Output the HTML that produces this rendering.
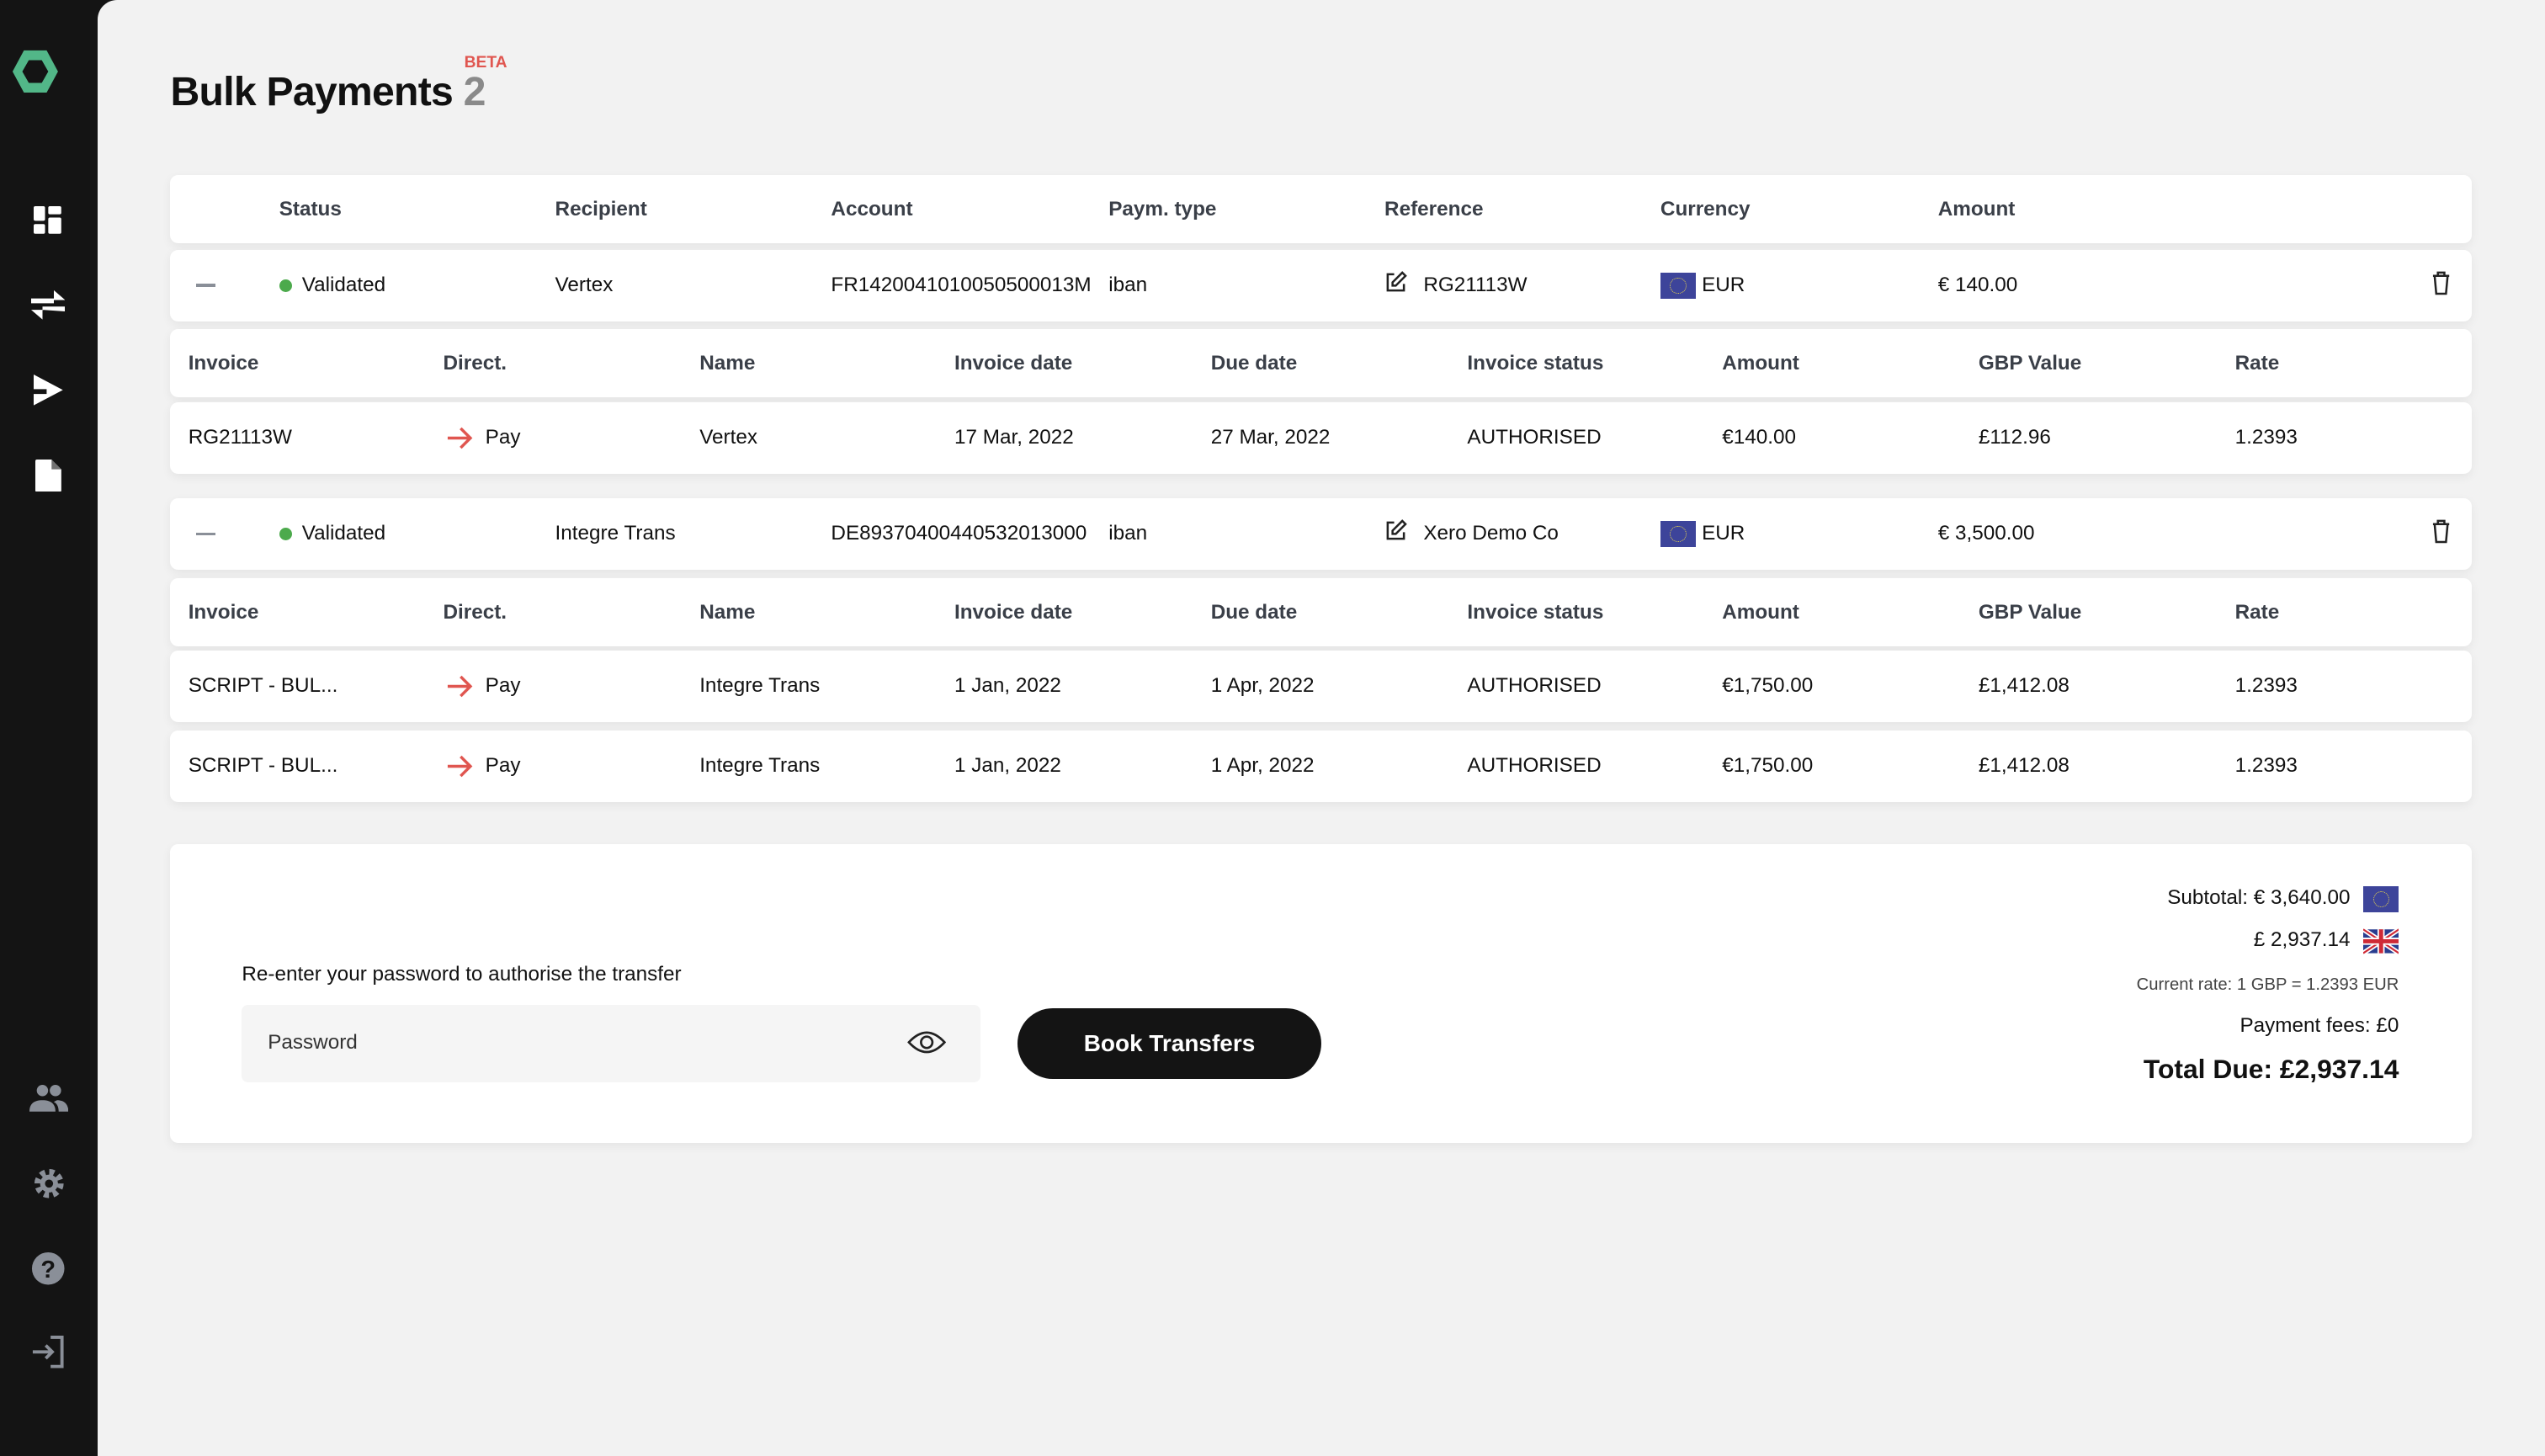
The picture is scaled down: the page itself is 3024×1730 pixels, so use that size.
<!DOCTYPE html>
<html><head><meta charset="utf-8">
<style>
*{margin:0;padding:0;box-sizing:border-box}
html,body{width:3024px;height:1730px;overflow:hidden;background:#141414}
#z{zoom:1.92857;width:1568px;height:897px;position:relative;font-family:"Liberation Sans",sans-serif;color:#111;font-size:12.6px}
.side{position:absolute;left:0;top:0;width:60px;height:897px;background:#141414}
.main{position:absolute;left:60px;top:0;width:1508px;height:897px;background:#f2f2f2;border-top-left-radius:12px}
.card{position:absolute;left:105px;width:1418px;background:#fff;border-radius:5px;box-shadow:0 2px 6px rgba(0,0,0,.06)}
.card span{position:absolute;white-space:nowrap}
.h{font-weight:bold;color:#3a3f48}
.ic{position:absolute}
.flag{display:inline-block;width:22px;height:16px;background:#3d449a;vertical-align:middle;position:relative}
.flag:after{content:"";position:absolute;left:6px;top:3px;width:9px;height:9px;border-radius:50%;border:1px dotted #e8d44c}
</style></head><body><div id="z">
<div class="side">
 <svg class="ic" style="left:7px;top:30px" width="30" height="28" viewBox="0 0 30 28"><path d="M8 1h14l7 13-7 13H8L1 14z" fill="#52b788"/><path d="M11 7h8l4 7-4 7h-8l-4-7z" fill="#141414"/></svg>
 <svg class="ic" style="left:21px;top:127px" width="17" height="17" viewBox="0 0 17 17" fill="#fff"><rect x="0" y="0" width="7" height="9" rx="1"/><rect x="9" y="0" width="8" height="5" rx="1"/><rect x="0" y="11" width="7" height="6" rx="1"/><rect x="9" y="7" width="8" height="10" rx="1"/></svg>
 <svg class="ic" style="left:19px;top:178px" width="21" height="20" viewBox="0 0 21 20" fill="#fff"><path d="M0 6h14V1l7 6-7 0z M0 6h14v3H0z"/><path d="M21 14H7v5l-7-6 7 0z M21 11H7v3h14z"/></svg>
 <svg class="ic" style="left:21px;top:231px" width="18" height="19" viewBox="0 0 18 19" fill="#fff"><path d="M0 0l18 9.5L0 19v-7h8v-3H0z"/></svg>
 <svg class="ic" style="left:22px;top:283px" width="16" height="20" viewBox="0 0 16 20" fill="#fff"><path d="M1 0h9l6 6v13a1 1 0 0 1-1 1H1a1 1 0 0 1-1-1V1a1 1 0 0 1 1-1z"/><path d="M10 0v6h6" fill="#141414" opacity=".6"/></svg>
 <svg class="ic" style="left:18px;top:668px" width="24" height="17" viewBox="0 0 24 17" fill="#8a8f98"><circle cx="8" cy="4" r="3.5"/><circle cx="16" cy="4" r="3.5"/><path d="M0 17c0-5 3-7 8-7s8 2 8 7z"/><path d="M17 10c4 0 7 2 7 7h-6c0-3-1-5-3-6z"/></svg>
 <svg class="ic" style="left:20px;top:719px" width="20" height="20" viewBox="0 0 20 20"><circle cx="10" cy="10" r="7" fill="none" stroke="#8a8f98" stroke-width="4" stroke-dasharray="3 2.5"/><circle cx="10" cy="10" r="5.5" fill="#8a8f98"/><circle cx="10" cy="10" r="2.5" fill="#141414"/></svg>
 <svg class="ic" style="left:19px;top:771px" width="21" height="21" viewBox="0 0 21 21"><circle cx="10.5" cy="10.5" r="10" fill="#8a8f98"/><text x="10.5" y="16" text-anchor="middle" font-family="Liberation Sans" font-weight="bold" font-size="15" fill="#141414">?</text></svg>
 <svg class="ic" style="left:19px;top:823px" width="21" height="20" viewBox="0 0 21 20" fill="none" stroke="#8a8f98" stroke-width="2"><path d="M12 1h7v18h-7"/><path d="M1 10h12M9 6l4 4-4 4"/></svg>
</div>
<div class="main"></div>

<div style="position:absolute;left:105px;top:42px;font-size:25px;font-weight:bold;letter-spacing:-.4px">Bulk Payments <span style="color:#8a8a8a">2</span></div>
<div style="position:absolute;left:286px;top:33px;font-size:10px;font-weight:bold;color:#e05650">BETA</div>

<div class="card" style="top:108px;height:42px;line-height:42px">
 <span class="h" style="left:67px">Status</span><span class="h" style="left:237px">Recipient</span><span class="h" style="left:407px">Account</span><span class="h" style="left:578px">Paym. type</span><span class="h" style="left:748px">Reference</span><span class="h" style="left:918px">Currency</span><span class="h" style="left:1089px">Amount</span>
</div>

<div class="card" style="top:154px;height:44px;line-height:44px">
 <span style="left:16px;top:21px;width:12px;height:2px;background:#8a8f98"></span>
 <span style="left:67px;top:18px;width:8px;height:8px;border-radius:50%;background:#4caa4c"></span>
 <span style="left:81px">Validated</span><span style="left:237px">Vertex</span><span style="left:407px;width:168px;overflow:hidden">FR1420041010050500013M</span><span style="left:578px">iban</span>
 <svg style="position:absolute;left:748px;top:13px" width="14" height="14" viewBox="0 0 14 14" fill="none" stroke="#222" stroke-width="1.3"><path d="M6 2H2v10h10V8"/><path d="M11 1l2 2-6 6H5V7z"/></svg>
 <span style="left:772px">RG21113W</span>
 <span style="left:918px"><i class="flag"></i> EUR</span>
 <span style="left:1089px">€ 140.00</span>
 <svg style="position:absolute;left:1393px;top:13px" width="12" height="15" viewBox="0 0 12 15" fill="none" stroke="#222" stroke-width="1.3"><path d="M1 3h10M4 3V1h4v2M2 3l1 11h6l1-11"/></svg>
</div>

<div class="card" style="top:203px;height:42px;line-height:42px">
 <span class="h" style="left:11px">Invoice</span><span class="h" style="left:168px">Direct.</span><span class="h" style="left:326px">Name</span><span class="h" style="left:483px">Invoice date</span><span class="h" style="left:641px">Due date</span><span class="h" style="left:799px">Invoice status</span><span class="h" style="left:956px">Amount</span><span class="h" style="left:1114px">GBP Value</span><span class="h" style="left:1272px">Rate</span>
</div>
<div class="card" style="top:248px;height:44px;line-height:44px">
 <span style="left:11px">RG21113W</span>
 <svg style="position:absolute;left:170px;top:15px" width="17" height="14" viewBox="0 0 17 14" fill="none" stroke="#e05650" stroke-width="1.8"><path d="M1 7h14M9 1l6 6-6 6"/></svg>
 <span style="left:194px">Pay</span><span style="left:326px">Vertex</span><span style="left:483px">17 Mar, 2022</span><span style="left:641px">27 Mar, 2022</span><span style="left:799px">AUTHORISED</span><span style="left:956px">€140.00</span><span style="left:1114px">£112.96</span><span style="left:1272px">1.2393</span>
</div>

<div class="card" style="top:307px;height:44px;line-height:44px">
 <span style="left:16px;top:21px;width:12px;height:2px;background:#8a8f98"></span>
 <span style="left:67px;top:18px;width:8px;height:8px;border-radius:50%;background:#4caa4c"></span>
 <span style="left:81px">Validated</span><span style="left:237px">Integre Trans</span><span style="left:407px;width:168px;overflow:hidden">DE89370400440532013000</span><span style="left:578px">iban</span>
 <svg style="position:absolute;left:748px;top:13px" width="14" height="14" viewBox="0 0 14 14" fill="none" stroke="#222" stroke-width="1.3"><path d="M6 2H2v10h10V8"/><path d="M11 1l2 2-6 6H5V7z"/></svg>
 <span style="left:772px">Xero Demo Co</span>
 <span style="left:918px"><i class="flag"></i> EUR</span>
 <span style="left:1089px">€ 3,500.00</span>
 <svg style="position:absolute;left:1393px;top:13px" width="12" height="15" viewBox="0 0 12 15" fill="none" stroke="#222" stroke-width="1.3"><path d="M1 3h10M4 3V1h4v2M2 3l1 11h6l1-11"/></svg>
</div>
<div class="card" style="top:356px;height:42px;line-height:42px">
 <span class="h" style="left:11px">Invoice</span><span class="h" style="left:168px">Direct.</span><span class="h" style="left:326px">Name</span><span class="h" style="left:483px">Invoice date</span><span class="h" style="left:641px">Due date</span><span class="h" style="left:799px">Invoice status</span><span class="h" style="left:956px">Amount</span><span class="h" style="left:1114px">GBP Value</span><span class="h" style="left:1272px">Rate</span>
</div>
<div class="card" style="top:401px;height:44px;line-height:44px">
 <span style="left:11px">SCRIPT - BUL...</span>
 <svg style="position:absolute;left:170px;top:15px" width="17" height="14" viewBox="0 0 17 14" fill="none" stroke="#e05650" stroke-width="1.8"><path d="M1 7h14M9 1l6 6-6 6"/></svg>
 <span style="left:194px">Pay</span><span style="left:326px">Integre Trans</span><span style="left:483px">1 Jan, 2022</span><span style="left:641px">1 Apr, 2022</span><span style="left:799px">AUTHORISED</span><span style="left:956px">€1,750.00</span><span style="left:1114px">£1,412.08</span><span style="left:1272px">1.2393</span>
</div>
<div class="card" style="top:450px;height:44px;line-height:44px">
 <span style="left:11px">SCRIPT - BUL...</span>
 <svg style="position:absolute;left:170px;top:15px" width="17" height="14" viewBox="0 0 17 14" fill="none" stroke="#e05650" stroke-width="1.8"><path d="M1 7h14M9 1l6 6-6 6"/></svg>
 <span style="left:194px">Pay</span><span style="left:326px">Integre Trans</span><span style="left:483px">1 Jan, 2022</span><span style="left:641px">1 Apr, 2022</span><span style="left:799px">AUTHORISED</span><span style="left:956px">€1,750.00</span><span style="left:1114px">£1,412.08</span><span style="left:1272px">1.2393</span>
</div>

<div class="card" style="top:520px;height:184px">
 <span style="left:44px;top:73px">Re-enter your password to authorise the transfer</span>
 <div style="position:absolute;left:44px;top:99px;width:455px;height:48px;background:#f5f5f5;border-radius:4px"></div>
 <span style="left:60px;top:115px;color:#333">Password</span>
 <svg style="position:absolute;left:454px;top:114px" width="24" height="16" viewBox="0 0 24 16" fill="none" stroke="#222" stroke-width="1.4"><path d="M1 8Q12-4 23 8Q12 20 1 8z"/><circle cx="12" cy="8" r="3.5"/></svg>
 <div style="position:absolute;left:522px;top:101px;width:187px;height:44px;border-radius:22px;background:#141414;color:#fff;font-weight:bold;font-size:14.5px;line-height:44px;text-align:center">Book Transfers</div>
 <span style="right:75px;top:26px">Subtotal: € 3,640.00</span><i class="flag" style="position:absolute;right:45px;top:26px;width:22px;height:16px"></i>
 <span style="right:75px;top:52px">£ 2,937.14</span>
 <svg style="position:absolute;right:45px;top:52px" width="22" height="16" viewBox="0 0 60 40"><rect width="60" height="40" fill="#2a3d8f"/><path d="M0 0L60 40M60 0L0 40" stroke="#fff" stroke-width="8"/><path d="M0 0L60 40M60 0L0 40" stroke="#cf2a36" stroke-width="3"/><path d="M30 0v40M0 20h60" stroke="#fff" stroke-width="12"/><path d="M30 0v40M0 20h60" stroke="#cf2a36" stroke-width="7"/></svg>
 <span style="right:45px;top:81px;font-size:10.5px;color:#444">Current rate: 1 GBP = 1.2393 EUR</span>
 <span style="right:45px;top:105px">Payment fees: £0</span>
 <span style="right:45px;top:129px;font-size:16.5px;font-weight:bold">Total Due: £2,937.14</span>
</div>
</div></body></html>
